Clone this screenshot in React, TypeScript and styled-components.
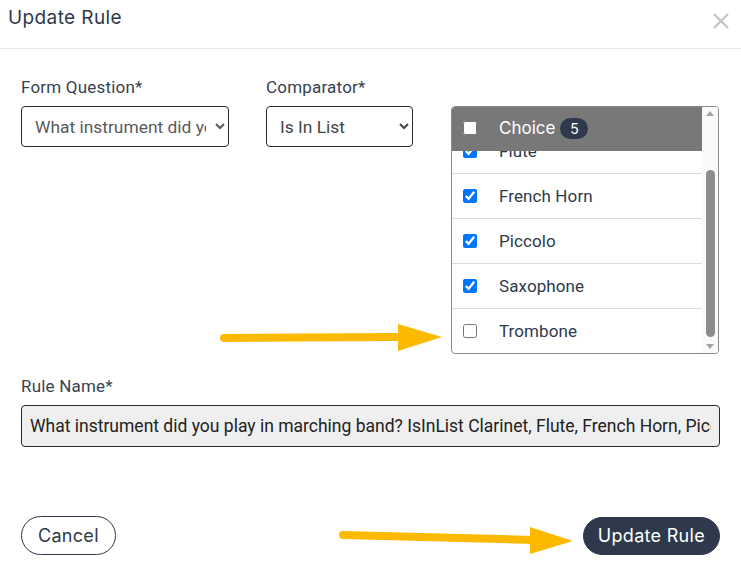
import React from "react";
import styled, { createGlobalStyle } from "styled-components";

const Global = createGlobalStyle`
  html, body { margin: 0; padding: 0; background: #fff; }
  body { font-family: Roboto, "Liberation Sans", sans-serif; }
  * { box-sizing: border-box; }
`;

const Page = styled.div`
  position: relative;
  width: 741px;
  height: 579px;
  overflow: hidden;
  background: #fff;
`;

const Header = styled.div`
  height: 49px;
  border-bottom: 1px solid #e6e6e6;
  display: flex;
  align-items: flex-start;
  justify-content: space-between;
  padding: 5px 11px 0 8px;
`;

const Title = styled.h1`
  margin: 0;
  font-family: Inter, "Open Sans", sans-serif;
  font-weight: 400;
  font-size: 19px;
  letter-spacing: 0.4px;
  line-height: 26px;
  color: #2e3a4b;
`;

const CloseButton = styled.button`
  border: 0;
  background: none;
  padding: 0;
  margin-top: 7px;
  width: 18px;
  height: 18px;
  display: flex;
  cursor: pointer;
`;

const Body = styled.div`
  padding: 25px 21px 0 21px;
`;

const TopGrid = styled.div`
  display: grid;
  grid-template-columns: 208px 147px 269px;
  column-gap: 37px;
  grid-template-rows: auto auto;
`;

const Label = styled.label`
  display: block;
  font-size: 17px;
  line-height: 22px;
  color: #38424f;
  padding-top: 2px;
  margin-bottom: 8px;
  letter-spacing: 0.2px;
`;

const Select = styled.select<{ $muted?: boolean }>`
  width: 100%;
  height: 41px;
  border: 1px solid #2a2a2a;
  border-radius: 4px;
  background: #fff;
  font-family: Roboto, "Liberation Sans", sans-serif;
  font-size: 17.4px;
  color: ${(p) => (p.$muted ? "#5a5a5a" : "#444")};
  padding: 0 6px 0 9px;
`;

const ListBox = styled.div`
  grid-column: 3;
  grid-row: 2;
  margin-left: 1px;
  height: 248px;
  border: 1px solid #8a8a8a;
  border-radius: 4px;
  display: flex;
  overflow: hidden;
`;

const ListViewport = styled.div`
  flex: 1;
  overflow: hidden;
  display: flex;
  flex-direction: column;
`;

const ListHeader = styled.div`
  position: relative;
  z-index: 1;
  height: 44px;
  flex: none;
  background: #787878;
  display: flex;
  align-items: center;
  padding: 0 0 2px 11px;
  border-top-left-radius: 3px;
`;

const HeaderText = styled.span`
  font-family: Inter, "Open Sans", sans-serif;
  font-size: 17px;
  color: #fff;
  margin-left: 22px;
`;

const Badge = styled.span`
  display: inline-flex;
  align-items: center;
  justify-content: center;
  width: 28px;
  height: 21px;
  margin-left: 5px;
  border-radius: 11px;
  background: #2e3a4b;
  color: #fff;
  font-family: Inter, "Open Sans", sans-serif;
  font-size: 14px;
`;

const Rows = styled.ul`
  list-style: none;
  margin: -22px 0 0 0;
  padding: 0;
`;

const Row = styled.li`
  height: 45px;
  display: flex;
  align-items: center;
  padding: 0 0 1px 11px;
  border-bottom: 1px solid #dcdcdc;
  &:last-child { border-bottom: 0; }
`;

const Check = styled.input.attrs({ type: "checkbox" })`
  width: 14px;
  height: 14px;
  margin: 0;
  accent-color: #0075ff;
`;

const RowText = styled.span`
  margin-left: 22px;
  font-size: 17px;
  letter-spacing: 0.1px;
  color: #2e3a4b;
`;

const ScrollTrack = styled.div`
  width: 16px;
  flex: none;
  background: #fafafa;
  display: flex;
  flex-direction: column;
  align-items: center;
  padding: 4px 0 3px;
`;

const ScrollArrow = styled.div<{ $down?: boolean }>`
  width: 0;
  height: 0;
  border-left: 4px solid transparent;
  border-right: 4px solid transparent;
  ${(p) =>
    p.$down
      ? "border-top: 5px solid #a3a3a3;"
      : "border-bottom: 5px solid #a3a3a3;"}
`;

const ScrollSpace = styled.div<{ $h: number }>`
  height: ${(p) => p.$h}px;
  flex: none;
`;

const Thumb = styled.div`
  width: 9px;
  height: 167px;
  border-radius: 5px;
  background: #8c8c8c;
  flex: none;
`;

const RuleSection = styled.div`
  margin-top: 19px;
`;

const TextInput = styled.input`
  width: 100%;
  height: 42px;
  border: 1px solid #2a2a2a;
  border-radius: 4px;
  background: #efefef;
  font-family: Roboto, "Liberation Sans", sans-serif;
  font-size: 17.5px;
  color: #222;
  padding: 0 8px;
`;

const Footer = styled.div`
  display: flex;
  justify-content: space-between;
  align-items: center;
  margin-top: 69px;
`;

const PillButton = styled.button<{ $primary?: boolean }>`
  height: ${(p) => (p.$primary ? 38 : 39)}px;
  padding: 0 ${(p) => (p.$primary ? 14 : 16)}px;
  border-radius: 20px;
  border: 1px solid #2e3a4b;
  background: ${(p) => (p.$primary ? "#2e3a4b" : "#fff")};
  color: ${(p) => (p.$primary ? "#fff" : "#2e3a4b")};
  font-family: Inter, "Open Sans", sans-serif;
  font-size: 18px;
  letter-spacing: 0.3px;
  cursor: pointer;
`;

const Overlay = styled.svg`
  position: absolute;
  left: 0;
  top: 0;
  pointer-events: none;
`;

const items = [
  { name: "Flute", checked: true },
  { name: "French Horn", checked: true },
  { name: "Piccolo", checked: true },
  { name: "Saxophone", checked: true },
  { name: "Trombone", checked: false },
];

export default function App() {
  return (
    <Page>
      <Global />
      <Header>
        <Title>Update Rule</Title>
        <CloseButton aria-label="Close">
          <svg width="18" height="18" viewBox="0 0 18 18">
            <path d="M2 2 L16 16 M16 2 L2 16" stroke="#c4c4c4" strokeWidth="2.2" />
          </svg>
        </CloseButton>
      </Header>
      <Body>
        <TopGrid>
          <Label>Form Question*</Label>
          <Label>Comparator*</Label>
          <span />
          <Select $muted defaultValue="q">
            <option value="q">What instrument did you play in marching band?</option>
          </Select>
          <Select defaultValue="in">
            <option value="in">Is In List</option>
          </Select>
          <ListBox>
            <ListViewport>
              <ListHeader>
                <Check readOnly checked={false} />
                <HeaderText>Choice</HeaderText>
                <Badge>5</Badge>
              </ListHeader>
              <Rows>
                {items.map((it) => (
                  <Row key={it.name}>
                    <Check readOnly checked={it.checked} />
                    <RowText>{it.name}</RowText>
                  </Row>
                ))}
              </Rows>
            </ListViewport>
            <ScrollTrack>
              <ScrollArrow />
              <ScrollSpace $h={54} />
              <Thumb />
              <ScrollSpace $h={7} />
              <ScrollArrow $down />
            </ScrollTrack>
          </ListBox>
        </TopGrid>
        <RuleSection>
          <Label>Rule Name*</Label>
          <TextInput
            readOnly
            value="What instrument did you play in marching band? IsInList Clarinet, Flute, French Horn, Piccolo, Saxophone"
          />
        </RuleSection>
        <Footer>
          <PillButton>Cancel</PillButton>
          <PillButton $primary>Update Rule</PillButton>
        </Footer>
      </Body>
      <Overlay width="741" height="579" viewBox="0 0 741 579">
        <line x1="224" y1="338" x2="402" y2="337" stroke="#fbba00" strokeWidth="8" strokeLinecap="round" />
        <polygon points="398,324 442,337 398,351" fill="#fbba00" />
        <line x1="343" y1="535" x2="534" y2="540" stroke="#fbba00" strokeWidth="8" strokeLinecap="round" />
        <polygon points="530,527 573,541 530,554" fill="#fbba00" />
      </Overlay>
    </Page>
  );
}
